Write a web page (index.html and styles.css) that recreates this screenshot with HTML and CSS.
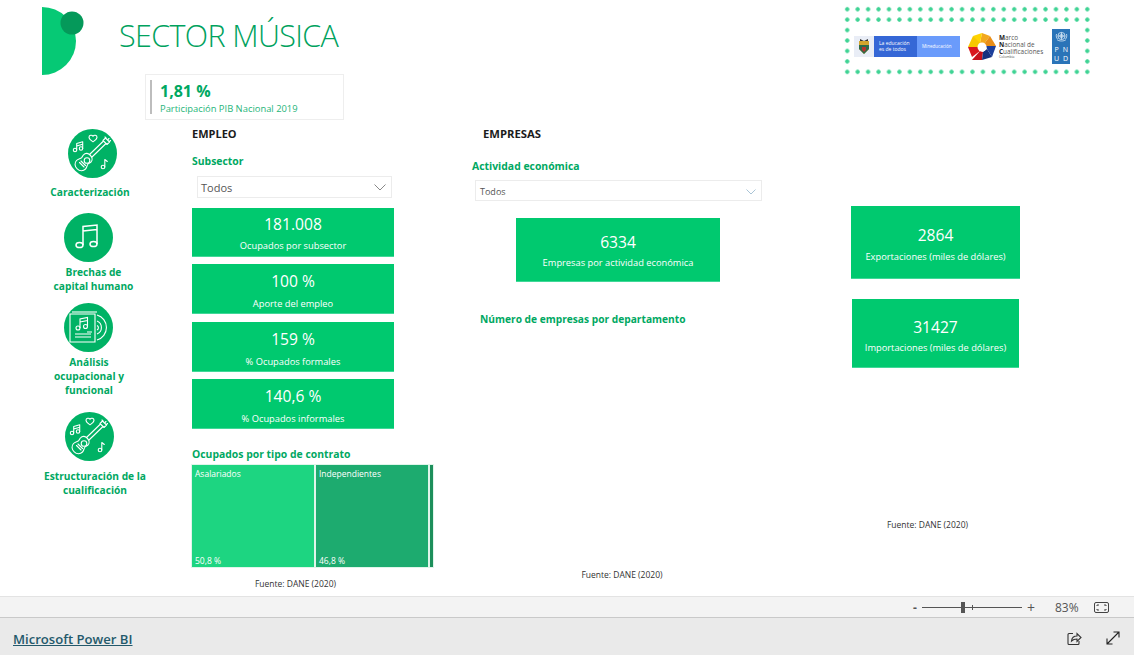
FILE: index.html
```html
<!DOCTYPE html>
<html lang="es">
<head>
    <meta charset="UTF-8" />
    <title>Sector Música</title>
    <link rel="stylesheet" href="styles.css">
</head>
<body>

<svg class="defs">
    <defs>
        <g id="guitar" fill="none" stroke="#fff" stroke-width="1.100" stroke-linecap="round" stroke-linejoin="round">
            <path d="M21.500 25.500L35.500 12M24 28l14-13.500" />
            <path d="M35 11.500l2.500-2.500 4 4-2.500 2.500z" />
            <path d="M38 9l-1-1M40 10.500l1-1M41.500 12.500l1-1" />
            <path d="M21.500 25.500c-2-1.500-4.500-1.300-6 .3-1 1-1 2.200-2 3-1.500 1-3.500 1-5 2.700-2.300 2.500-1.800 6 .7 8.300 2.500 2.300 6 2.500 8.300.2 1.500-1.500 1.300-3.500 2.500-5 .8-1 2-1 3-2 1.500-1.700 1.500-4.500-.5-6.500z" />
            <circle cx="19" cy="31.500" r="2.800" />
            <path d="M11.500 33.500l4.500 4.500M13 32l4.500 4.500" />
            <path d="M25 7.300c-1-1.800-4-1.300-4 1 0 2 2.300 3.300 4 4.500 1.700-1.200 4-2.500 4-4.500 0-2.300-3-2.800-4-1z" />
            <circle cx="7" cy="21" r="1.700" /><circle cx="13" cy="19.500" r="1.700" />
            <path d="M8.700 21v-6.500l6-1.800v6.800M8.700 17l6-1.800" />
            <circle cx="35" cy="38" r="1.800" />
            <path d="M36.800 38v-7.500l2.500 2" />
        </g>
    </defs>
</svg>

<main class="canvas">
    <header class="top">
        <svg class="logo" width="44" height="68" viewBox="0 0 44 68">
            <path d="M0 0a34 34 0 0 1 0 68z" fill="#06c975" />
            <circle cx="30" cy="16" r="11.500" fill="#05995a" />
        </svg>
        <h1>SECTOR MÚSICA</h1>
        <div class="dots">
            <div class="logos">
                <div class="mined">
                    <svg width="20" height="21" viewBox="0 0 20 21"><rect width="20" height="21" fill="#e9edf6" /><path d="M5 5h10v8l-5 5-5-5z" fill="#d3a52c" /><path d="M5 9h10v4l-5 5-5-5z" fill="#2d6a4a" /><path d="M8 11h4v3l-2 2-2-2z" fill="#b5352e" /><path d="M6 3l4 2 4-2v2H6z" fill="#333" /></svg>
                    <div class="mined-a">La educación<br>es de todos</div>
                    <div class="mined-b">Mineducación</div>
                </div>
                <div class="mnc">
                    <svg width="28" height="29" viewBox="0 0 28 29">
                        <path d="M14 1l8 3-6 8-4-1z" fill="#f2a81d" />
                        <path d="M5 4l9-3-2 10-3 2z" fill="#ffd400" />
                        <path d="M0 15L5 4l7 7-2 4z" fill="#f7c600" />
                        <path d="M4 25L0 15h10l2 4z" fill="#d9161f" />
                        <path d="M14 28H4l8-9 3 1z" fill="#c5101c" />
                        <path d="M24 25l-10 3 1-8 4-3z" fill="#16307f" />
                        <path d="M28 14l-4 11-5-8-1-3z" fill="#1c3f9b" />
                        <path d="M22 4l6 10H18l-2-2z" fill="#e98e17" />
                        <circle cx="14" cy="15" r="4.500" fill="#fff" />
                    </svg>
                    <div class="mnc-text"><b>M</b>arco<br><b>N</b>acional de<br><b>C</b>ualificaciones<small>Colombia</small></div>
                </div>
                <div class="undp">
                    <svg class="un-mark" width="13" height="13" viewBox="0 0 13 13" fill="none" stroke="#dcebf7" stroke-width=".8"><circle cx="6.500" cy="6" r="3.600" /><circle cx="6.500" cy="6" r="1.600" /><path d="M6.500 2.400v7.200M2.900 6h7.200M2 9.500c1.500 2 7.500 2 9 0M1.500 4c-.6 2 0 4 1 5M11.500 4c.6 2 0 4-1 5" /></svg>
                    <div class="undp-grid"><span>P</span><span>N</span><span>U</span><span>D</span></div>
                </div>
            </div>
        </div>
    </header>

    <section class="kpi">
        <div class="kpi-val">1,81 %</div>
        <div class="kpi-label">Participación PIB Nacional 2019</div>
    </section>

    <div class="board">
        <nav class="side">
            <a class="side-item item-a">
                <svg class="circle" viewBox="0 0 49 49"><circle cx="24.500" cy="24.500" r="24.500" fill="#00b265" /><use href="#guitar" /></svg>
                <span>Caracterización</span>
            </a>
            <a class="side-item item-b">
                <svg class="circle" viewBox="0 0 49 49">
                    <circle cx="24.500" cy="24.500" r="24.500" fill="#00b265" />
                    <g fill="none" stroke="#fff" stroke-width="1.500">
                        <ellipse cx="15.500" cy="32" rx="3.500" ry="2.600" /><ellipse cx="29.500" cy="31" rx="3.500" ry="2.600" />
                        <path d="M19 32V13.500l14-1.500V31M19 18l14-1.500" />
                    </g>
                </svg>
                <span>Brechas de<br>capital humano</span>
            </a>
            <a class="side-item item-c">
                <svg class="circle" viewBox="0 0 49 49">
                    <circle cx="24.500" cy="24.500" r="24.500" fill="#00b265" />
                    <g fill="none" stroke="#fff" stroke-width="1.100">
                        <path d="M6 11h25v28H6z" />
                        <path d="M8 9h25" />
                        <circle cx="14" cy="25" r="2" /><circle cx="21.500" cy="23.500" r="2" />
                        <path d="M16 25v-9l7.500-1.500v9M16 19l7.500-1.500" />
                        <path d="M11 31h16M11 34h16M23 29h5" />
                        <path d="M33 12a13 13 0 0 1 0 25M33 18a7 7 0 0 1 0 13M33 22.500a2.500 2.500 0 0 1 0 4.500" />
                    </g>
                </svg>
                <span>Análisis<br>ocupacional y<br>funcional</span>
            </a>
            <a class="side-item item-d">
                <svg class="circle" viewBox="0 0 49 49"><circle cx="24.500" cy="24.500" r="24.500" fill="#00b265" /><use href="#guitar" /></svg>
                <span>Estructuración de la<br>cualificación</span>
            </a>
        </nav>

        <section class="col-empleo">
            <h2>EMPLEO</h2>
            <h3 class="h-sub">Subsector</h3>
            <div class="slicer slicer-a">Todos<svg width="12" height="7" viewBox="0 0 12 7"><path d="M.5.5L6 6 11.500.5" fill="none" stroke="#888" /></svg></div>
            <div class="tiles">
                <div class="tile t1"><div class="num">181.008</div><div class="cap">Ocupados por subsector</div></div>
                <div class="tile t2"><div class="num">100 %</div><div class="cap">Aporte del empleo</div></div>
                <div class="tile t2 t-gap"><div class="num">159 %</div><div class="cap">% Ocupados formales</div></div>
                <div class="tile t2"><div class="num">140,6 %</div><div class="cap">% Ocupados informales</div></div>
            </div>
            <h3 class="h-tree">Ocupados por tipo de contrato</h3>
            <div class="treemap">
                <div class="cell c-asal"><span>Asalariados</span><span>50,8 %</span></div>
                <div class="cell c-ind"><span>Independientes</span><span>46,8 %</span></div>
                <div class="cell c-other"></div>
            </div>
            <p class="source src-a">Fuente: DANE (2020)</p>
        </section>

        <section class="col-empresas">
            <h2 class="h-emp">EMPRESAS</h2>
            <h3 class="h-act">Actividad económica</h3>
            <div class="slicer slicer-b">Todos<svg width="10" height="6" viewBox="0 0 10 6"><path d="M.5.5L5 5 9.500.5" fill="none" stroke="#a9c4d6" /></svg></div>
            <div class="tile t-emp"><div class="num">6334</div><div class="cap">Empresas por actividad económica</div></div>
            <h3 class="h-dep">Número de empresas por departamento</h3>
            <p class="source src-b">Fuente: DANE (2020)</p>
        </section>

        <section class="col-trade">
            <div class="tile t-exp"><div class="num">2864</div><div class="cap">Exportaciones (miles de dólares)</div></div>
            <div class="tile t-imp"><div class="num">31427</div><div class="cap">Importaciones (miles de dólares)</div></div>
            <p class="source src-c">Fuente: DANE (2020)</p>
        </section>
    </div>
</main>

<div class="zoombar">
    <span class="zb-minus">-</span>
    <div class="slider"><i class="tick"></i><i class="thumb"></i></div>
    <span class="zb-plus">+</span>
    <span class="zb-pct">83%</span>
    <svg width="15" height="11" viewBox="0 0 15 11" fill="none" stroke="#444"><rect x=".5" y=".5" width="14" height="10" rx="1.500" /><path d="M3 4V3h2M12 4V3h-2M3 7v1h2M12 7v1h-2" /></svg>
</div>

<footer class="bottom">
    <a class="pbi" href="#">Microsoft Power BI</a>
    <div class="bottom-icons">
        <svg width="15" height="15" viewBox="0 0 15 15" fill="none" stroke="#333" stroke-width="1.100"><path d="M6 2.500H2a1 1 0 0 0-1 1v9a1 1 0 0 0 1 1h9a1 1 0 0 0 1-1V10" /><path d="M4.500 10c.3-3 2.500-5 5.500-5V2.500l4 4-4 4V8c-2 0-4 .5-5.500 2z" /></svg>
        <svg width="14" height="14" viewBox="0 0 14 14" fill="none" stroke="#222" stroke-width="1.100"><path d="M1 13L13 1M7.500 1H13v5.500M1 7.500V13h5.500" /></svg>
    </div>
</footer>

</body>
</html>
```

FILE: styles.css
```css
* { box-sizing: border-box; }
html, body { margin: 0; height: 655px; overflow: hidden; }
body { font-family: 'Open Sans', sans-serif; background: #fff; color: #333; display: flex; flex-direction: column; width: 1134px; }
.defs { width: 0; height: 0; display: block; }
h1, h2, h3, p { margin: 0; }

.canvas { height: 596px; flex: none; }

/* header */
.top { height: 74px; padding: 7px 0 0 42px; display: flex; align-items: flex-start; }
.logo { flex: none; }
.top h1 {
    margin: 8px 0 0 33px; font-size: 30.500px; line-height: 40px; font-weight: 300;
    letter-spacing: -.65px; color: #00a25e; white-space: nowrap; width: 723px; flex: none;
}
.dots {
    width: 251px; height: 74px; margin-top: -3px; flex: none;
    background: radial-gradient(circle, #3fd394 1.800px, transparent 2.400px) 0 0 / 10.450px 10.450px;
}
.logos {
    margin: 22px 0 0 10px; width: 232px; height: 41px; background: #fff;
    display: flex; align-items: center; padding-left: 2px;
}
.mined { display: flex; height: 21px; width: 106px; flex: none; }
.mined-a { background: #3567d6; color: #fff; font-size: 5px; line-height: 5.500px; width: 43px; padding: 5px 0 0 5px; }
.mined-b { background: #6a9bfb; color: #fff; font-size: 4.500px; line-height: 21px; width: 43px; padding-left: 5px; }
.mnc { display: flex; align-items: center; margin-left: 8px; width: 84px; flex: none; }
.mnc-text { font-size: 6.400px; line-height: 7px; color: #555; margin-left: 3px; white-space: nowrap; }
.mnc-text b { color: #222; }
.mnc-text small { display: block; font-size: 3.500px; line-height: 4px; }
.undp { width: 18px; height: 35px; background: #2a74b8; flex: none; color: #fff; padding-top: 1px; }
.un-mark { display: block; margin: 0 auto 2px; }
.undp-grid { display: grid; grid-template-columns: 1fr 1fr; font-size: 7px; line-height: 9px; text-align: center; gap: 0; }

/* kpi */
.kpi {
    width: 199px; height: 46px; margin-left: 145px; border: 1px solid #eeeeee;
    position: relative; padding: 6px 0 0 14px;
}
.kpi::before { content: ""; position: absolute; left: 4px; top: 5px; bottom: 5px; width: 2px; background: #bdbdbd; }
.kpi-val { font-size: 16px; line-height: 21px; font-weight: 700; color: #00a862; }
.kpi-label { font-size: 9.400px; line-height: 13px; color: #1fb57a; }

/* board */
.board { display: flex; height: 476px; }

.side { width: 192px; flex: none; padding: 8px 0 0 38px; }
.side-item { display: block; width: 104px; text-align: center; font-size: 10.200px; font-weight: 700; line-height: 14px; color: #00a862; }
.side-item span { display: block; }
.circle { display: block; width: 49px; height: 49px; }
.item-a .circle { margin: 1px 0 0 29.500px; }
.item-a span { margin-top: 7px; }
.item-b { margin-top: 14px; }
.item-b .circle { margin-left: 26px; }
.item-b span { margin: 3px -7px 0 0; }
.item-c { margin-top: 10px; }
.item-c .circle { margin-left: 26px; }
.item-c span { margin: 3px 2px 0 0; }
.item-d { margin-top: 15px; }
.item-d .circle { margin-left: 26.500px; }
.item-d span { margin: 8px -10px 0 0; }

h2 { font-size: 11px; line-height: 14px; font-weight: 700; color: #1c1c1c; }
h3 { font-size: 10.400px; line-height: 14px; font-weight: 700; color: #00a862; white-space: nowrap; }

.col-empleo { width: 280px; flex: none; padding-top: 7px; }
.h-sub { margin-top: 13px; }
.slicer {
    border: 1px solid #ececec; display: flex; align-items: center; justify-content: space-between;
    font-size: 11px; color: #555; background: #fff;
}
.slicer-a { width: 195px; height: 22px; margin: 8px 0 0 5px; padding: 0 5px 0 3px; }
.tiles { width: 202px; margin-top: 10px; display: flex; flex-direction: column; gap: 7px; }
.t-gap { margin-top: 1px; }

.tile { background: #00c96f; color: #fff; text-align: center; display: flex; flex-direction: column; justify-content: center; border-bottom: 1px solid #40d898; }
.tile .num { font-size: 15.600px; line-height: 22px; }
.tile .cap { font-size: 9.300px; line-height: 13px; }
.t1 { height: 49px; padding-top: 1px; }
.t2 { height: 50px; padding-top: 2px; }
.t1 .cap { margin-top: 4px; }
.t2 .cap { margin-top: 5px; }

.h-tree { margin-top: 18px; }
.treemap { width: 243px; height: 104px; margin: 3px 0 0 -1px; display: flex; gap: 2px; border: 1px solid #dff5ea; background: #dff5ea; }
.cell { display: flex; flex-direction: column; justify-content: space-between; font-size: 8.500px; line-height: 12px; color: #fff; padding: 3px 3px 0; }
.c-asal { width: 122px; background: #1dd581; }
.c-ind { width: 112px; background: #1dab6f; }
.c-other { width: 3px; background: #1c8f5b; padding: 0; }

.source { font-size: 8.500px; line-height: 12px; color: #333; text-align: center; }
.src-a { width: 207px; margin: 10px 0 0 0; }

.col-empresas { width: 379px; flex: none; }
.h-emp { margin: 7px 0 0 11px; font-size: 11.300px; }
.h-act { margin-top: 18px; }
.slicer-b { width: 287px; height: 21px; margin: 7px 0 0 3px; font-size: 9px; padding: 2px 5px 0 4px; }
.t-emp { width: 204px; height: 64px; margin: 17px 0 0 44px; padding-top: 1px; }
.t-emp .cap { margin-top: 3px; }
.h-dep { margin: 30px 0 0 8px; font-size: 10.200px; }
.src-b { width: 300px; margin-top: 243px; }

.col-trade { width: 171px; flex: none; }
.t-exp { width: 169px; height: 73px; margin-top: 86px; padding-top: 2px; }
.t-imp { width: 167px; height: 69px; margin: 20px 0 0 1px; padding-top: 4px; }
.t-exp .cap { margin-top: 4px; }
.t-imp .cap { margin-top: 3px; }
.src-c { width: 153px; margin-top: 151px; }

/* bars */
.zoombar {
    height: 22px; flex: none; background: #f3f3f3; border-top: 1px solid #e3e3e3; border-bottom: 1px solid #c9c9c9;
    display: flex; align-items: center; padding-left: 913px; color: #555; font-size: 12px;
}
.zb-minus { width: 9px; font-weight: 700; }
.slider { width: 100px; height: 1px; background: #555; position: relative; }
.tick { position: absolute; left: 50px; top: -2px; width: 1px; height: 5px; background: #555; }
.thumb { position: absolute; left: 39px; top: -5px; width: 4px; height: 11px; background: #555; }
.zb-plus { margin-left: 5px; width: 28px; font-size: 14px; }
.zb-pct { width: 39px; }

.bottom {
    flex: 1; background: #eaeaea; display: flex; align-items: center; justify-content: space-between;
    padding: 4px 14px 0 13px;
}
.pbi { font-size: 13.100px; font-weight: 600; color: #23596b; text-decoration: underline; }
.bottom-icons { display: flex; gap: 24px; }
```
